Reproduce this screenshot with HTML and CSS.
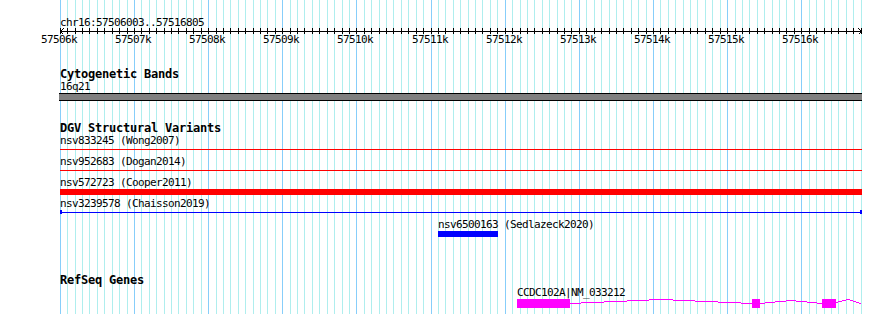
FILE: index.html
```html
<!DOCTYPE html>
<html>
<head>
<meta charset="utf-8">
<title>chr16:57506003..57516805</title>
<link rel="stylesheet" href="styles.css">
</head>
<body>
<div class="browser">
  <svg class="grid" id="grid" width="890" height="314" shape-rendering="crispEdges"></svg>
  <div class="tracks">
    <section class="ruler">
      <div class="coord">chr16:57506003..57516805</div>
      <svg class="scale" id="scale" width="802" height="6" shape-rendering="crispEdges"></svg>
      <div class="ticklabels">
        <span style="left:-19px">57506k</span>
        <span style="left:55px">57507k</span>
        <span style="left:129px">57508k</span>
        <span style="left:203px">57509k</span>
        <span style="left:277px">57510k</span>
        <span style="left:352px">57511k</span>
        <span style="left:426px">57512k</span>
        <span style="left:500px">57513k</span>
        <span style="left:574px">57514k</span>
        <span style="left:648px">57515k</span>
        <span style="left:722px">57516k</span>
      </div>
    </section>

    <section class="track cyto">
      <div class="title">Cytogenetic Bands</div>
      <div class="label band-label">16q21</div>
      <div class="band"></div>
    </section>

    <section class="track dgv">
      <div class="title">DGV Structural Variants</div>
      <div class="label row-first">nsv833245 (Wong2007)</div>
      <div class="sv-line red"></div>
      <div class="label row-next">nsv952683 (Dogan2014)</div>
      <div class="sv-line red"></div>
      <div class="label row-next">nsv572723 (Cooper2011)</div>
      <div class="sv-bar red"></div>
      <div class="label row-after-bar">nsv3239578 (Chaisson2019)</div>
      <div class="sv-line blue capped"></div>
      <div class="label row-next offset-sed">nsv6500163 (Sedlazeck2020)</div>
      <div class="sv-bar blue sed"></div>
    </section>

    <section class="track refseq">
      <div class="title">RefSeq Genes</div>
      <div class="label gene-label">CCDC102A|NM_033212</div>
      <svg class="gene" width="802" height="9" shape-rendering="crispEdges">
        <rect x="457" y="0" width="53" height="9" fill="#ff00ff"/>
        <rect x="692" y="0" width="8" height="9" fill="#ff00ff"/>
        <rect x="762" y="0" width="14" height="9" fill="#ff00ff"/>
        <polyline points="510,4.5 601,0.5 692,4.5" fill="none" stroke="#ff00ff" stroke-width="1"/>
        <polyline points="700,4.5 731,1.5 762,4.5" fill="none" stroke="#ff00ff" stroke-width="1"/>
        <polyline points="776,3.5 788,0.5 801,4.5" fill="none" stroke="#ff00ff" stroke-width="1"/>
      </svg>
    </section>
  </div>
</div>
<script src="script.js"></script>
</body>
</html>
```

FILE: styles.css
```css
html, body {
  margin: 0;
  padding: 0;
  background: #ffffff;
}

.browser {
  position: relative;
  width: 890px;
  height: 314px;
  overflow: hidden;
  background: #ffffff;
  color: #000000;
  font-family: "DejaVu Sans Mono", "Liberation Mono", monospace;
}

.grid {
  position: absolute;
  left: 0;
  top: 0;
  z-index: 0;
}

.tracks {
  position: relative;
  z-index: 1;
  margin-left: 60px;
  width: 802px;
}

.coord,
.label,
.ticklabels {
  font-size: 11px;
  line-height: 11px;
  height: 11px;
  letter-spacing: -0.62px;
  white-space: nowrap;
}

.title {
  font-size: 12px;
  font-weight: bold;
  line-height: 12px;
  height: 12px;
  letter-spacing: -0.22px;
  white-space: nowrap;
}

/* ruler */
.coord {
  padding-top: 17px;
}

.scale {
  display: block;
}

.ticklabels {
  position: relative;
}

.ticklabels span {
  position: absolute;
  top: 0;
}

/* cytogenetic bands */
.cyto {
  margin-top: 23px;
}

.band-label {
  margin-top: 1px;
}

.band {
  margin-top: 1px;
  margin-left: -1px;
  width: 803px;
  height: 6px;
  background: #808080;
  border-top: 1px solid #000000;
  border-bottom: 1px solid #000000;
}

/* DGV */
.dgv {
  margin-top: 21px;
}

.row-first {
  margin-top: 1px;
}

.row-next {
  margin-top: 6px;
}

.row-after-bar {
  margin-top: 3px;
}

.sv-line {
  position: relative;
  margin-top: 3px;
  height: 1px;
  width: 802px;
}

.sv-bar {
  margin-top: 1px;
  height: 6px;
  width: 802px;
}

.red { background: #ff0000; }
.blue { background: #0000ff; }

.capped::before,
.capped::after {
  content: "";
  position: absolute;
  top: -2px;
  width: 2px;
  height: 4px;
  background: #0000ff;
}

.capped::before { left: 0; }
.capped::after { right: 0; }

.offset-sed {
  margin-left: 378px;
}

.sed {
  margin-left: 378px;
  width: 60px;
}

/* RefSeq */
.refseq {
  margin-top: 37px;
}

.gene-label {
  margin-top: 1px;
  margin-left: 457px;
}

.gene {
  display: block;
  margin-top: 1px;
}
```

FILE: script.js
```js
(function () {
  var NS = 'http://www.w3.org/2000/svg';
  var x0 = 59.78;
  var step = 7.4153;
  var grid = document.getElementById('grid');
  var scale = document.getElementById('scale');

  function line(parent, x1, y1, x2, y2, color) {
    var l = document.createElementNS(NS, 'line');
    l.setAttribute('x1', x1);
    l.setAttribute('y1', y1);
    l.setAttribute('x2', x2);
    l.setAttribute('y2', y2);
    l.setAttribute('stroke', color);
    l.setAttribute('stroke-width', '1');
    parent.appendChild(l);
  }

  for (var i = 0; i <= 108; i++) {
    var x = Math.round(x0 + i * step);
    var major = i % 10 === 0;
    line(grid, x + 0.5, 0, x + 0.5, 314, major ? '#87cefa' : '#afeeee');
    var rx = x - 60 + 0.5;
    line(scale, rx, 0, rx, 6, '#000000');
  }

  /* axis line and arrowheads */
  line(scale, 0, 3.5, 802, 3.5, '#000000');
  line(scale, 0.5, 3.5, 3.5, 0.5, '#000000');
  line(scale, 0.5, 3.5, 3.5, 6.5, '#000000');
  line(scale, 801.5, 3.5, 798.5, 0.5, '#000000');
  line(scale, 801.5, 3.5, 798.5, 6.5, '#000000');
})();
```
